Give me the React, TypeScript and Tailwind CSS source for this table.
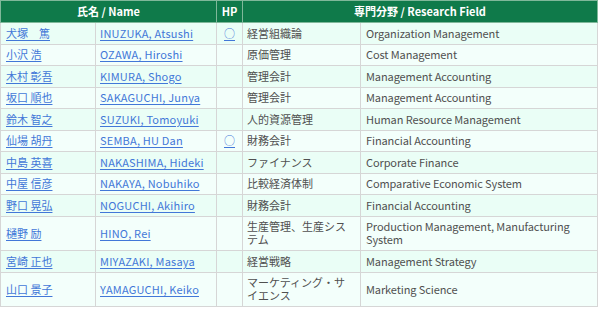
import React from "react";

type Row = { ja: string; en: string; hp?: boolean; fja: string; fen: string; tall?: boolean };

const rows: Row[] = [
  { ja: "犬塚　篤", en: "INUZUKA, Atsushi", hp: true, fja: "経営組織論", fen: "Organization Management" },
  { ja: "小沢 浩", en: "OZAWA, Hiroshi", fja: "原価管理", fen: "Cost Management" },
  { ja: "木村 彰吾", en: "KIMURA, Shogo", fja: "管理会計", fen: "Management Accounting" },
  { ja: "坂口 順也", en: "SAKAGUCHI, Junya", fja: "管理会計", fen: "Management Accounting" },
  { ja: "鈴木 智之", en: "SUZUKI, Tomoyuki", fja: "人的資源管理", fen: "Human Resource Management" },
  { ja: "仙場 胡丹", en: "SEMBA, HU Dan", hp: true, fja: "財務会計", fen: "Financial Accounting" },
  { ja: "中島 英喜", en: "NAKASHIMA, Hideki", fja: "ファイナンス", fen: "Corporate Finance" },
  { ja: "中屋 信彦", en: "NAKAYA, Nobuhiko", fja: "比較経済体制", fen: "Comparative Economic System" },
  { ja: "野口 晃弘", en: "NOGUCHI, Akihiro", fja: "財務会計", fen: "Financial Accounting" },
  { ja: "樋野 励", en: "HINO, Rei", fja: "生産管理、生産システム", fen: "Production Management, Manufacturing System", tall: true },
  { ja: "宮崎 正也", en: "MIYAZAKI, Masaya", fja: "経営戦略", fen: "Management Strategy" },
  { ja: "山口 景子", en: "YAMAGUCHI, Keiko", fja: "マーケティング・サイエンス", fen: "Marketing Science", tall: true },
];

const font = { fontFamily: '"Noto Sans CJK JP", "Noto Sans", sans-serif' };

export default function App() {
  return (
    <div className="w-[600px] h-[310px] bg-white" style={font}>
      <table className="w-[598px] border-collapse table-fixed text-[11px] leading-[13px] border border-[#d2d2d2]">
        <colgroup>
          <col className="w-[95px]" />
          <col className="w-[121px]" />
          <col className="w-[26px]" />
          <col className="w-[118px]" />
          <col />
        </colgroup>
        <thead>
          <tr className="h-[22px] bg-[#0f7a4a] text-white font-bold">
            <th colSpan={2} className="border border-[#7fb89a] text-center font-bold">氏名 / Name</th>
            <th className="border border-[#7fb89a] text-center font-bold">HP</th>
            <th colSpan={2} className="border border-[#7fb89a] text-center font-bold">専門分野 / Research Field</th>
          </tr>
        </thead>
        <tbody>
          {rows.map((r, i) => (
            <tr key={i} className={i % 2 === 0 ? "bg-[#eafef6]" : "bg-[#f3fffb]"}>
              <td className="border border-[#d6d6d6] px-[5px] py-[3.75px] align-middle">
                <a href="#" className="text-[#4277d8] underline underline-offset-2">{r.ja}</a>
              </td>
              <td className="border border-[#d6d6d6] px-[4px] py-[3.75px] align-middle">
                <a href="#" className="text-[#4277d8] underline underline-offset-2 tracking-[0.2px]">{r.en}</a>
              </td>
              <td className="border border-[#d6d6d6] px-0 py-[3.75px] text-center align-middle">
                {r.hp ? <a href="#" className="text-[#4277d8] underline underline-offset-2">○</a> : null}
              </td>
              <td className="border border-[#d6d6d6] px-[4px] py-[3.75px] text-[#505050] align-middle">{r.fja}</td>
              <td className="border border-[#d6d6d6] px-[5px] py-[3.75px] text-[#505050] align-middle tracking-[-0.1px]">{r.fen}</td>
            </tr>
          ))}
        </tbody>
      </table>
    </div>
  );
}
